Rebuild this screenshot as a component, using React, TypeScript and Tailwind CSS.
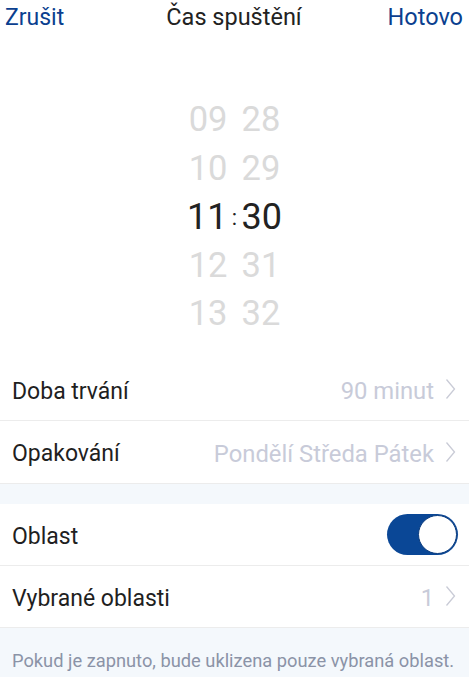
import React from "react";

const Chevron = () => (
  <svg width="11" height="22" viewBox="0 0 11 22" className="ml-[11px] shrink-0">
    <path d="M1.5 1.5 L9.5 11 L1.5 20.5" fill="none" stroke="#c9cbd6" strokeWidth="1.3" />
  </svg>
);

const Row = ({ label, value, border = true, children }: { label: string; value?: string; border?: boolean; children?: React.ReactNode }) => (
  <div className={`flex items-center justify-between h-[62px] bg-white pl-[12px] pr-[13px] ${border ? "border-b border-[#ececec]" : ""}`}>
    <span className="text-[23px] text-[#1f1f1f] mt-[6px]">{label}</span>
    {children ?? (
      <div className="flex items-center">
        <span className="text-[23.8px] text-[#c8cbd9] mt-[6px]">{value}</span>
        <Chevron />
      </div>
    )}
  </div>
);

export default function App() {
  const hours = ["09", "10", "11", "12", "13"];
  const mins = ["28", "29", "30", "31", "32"];
  return (
    <div className="w-[469px] h-[677px] bg-white overflow-hidden" style={{ fontFamily: "Roboto, 'Noto Sans', sans-serif" }}>
      <div className="grid grid-cols-[1fr_auto_1fr] items-center h-[36px] pl-[5px] pr-[6px]">
        <span className="text-[23px] text-[#0b3f8f] justify-self-start">Zrušit</span>
        <span className="text-[23.5px] text-[#222]">Čas spuštění</span>
        <span className="text-[23.5px] text-[#0b3f8f] justify-self-end">Hotovo</span>
      </div>
      <div className="flex justify-center pt-[60px] pb-[20px]">
        <div className="flex flex-col items-end w-[44px]">
          {hours.map((h, i) => (
            <div key={h} className={`h-[48.5px] flex items-center ${i === 2 ? "text-[36px] text-[#222]" : "text-[34.5px] text-[#dadada]"}`}>{h}</div>
          ))}
        </div>
        <div className="flex flex-col w-[14px] items-center">
          {hours.map((h, i) => (
            <div key={h} className="h-[48.5px] flex items-center text-[22px] text-[#222]">{i === 2 ? ":" : ""}</div>
          ))}
        </div>
        <div className="flex flex-col items-start w-[44px]">
          {mins.map((m, i) => (
            <div key={m} className={`h-[48.5px] flex items-center ${i === 2 ? "text-[36px] text-[#222]" : "text-[34.5px] text-[#dadada]"}`}>{m}</div>
          ))}
        </div>
      </div>
      <Row label="Doba trvání" value="90 minut" />
      <Row label="Opakování" value="Pondělí Středa Pátek" border={false} />
      <div className="h-[21px] bg-[#f4f8fc] border-t border-[#ececec]" />
      <Row label="Oblast">
        <div className="w-[71px] h-[41px] rounded-full bg-[#0a4796] flex items-center justify-end pr-[1px] mr-[-2px]">
          <div className="w-[39px] h-[39px] rounded-full bg-white border border-[#0a3b7d]" />
        </div>
      </Row>
      <Row label="Vybrané oblasti" value="1" />
      <div className="bg-[#f4f8fc] h-[60px] pl-[12px] pt-[19px]">
        <span className="text-[18.3px] text-[#8b93a7]">Pokud je zapnuto, bude uklizena pouze vybraná oblast.</span>
      </div>
    </div>
  );
}
